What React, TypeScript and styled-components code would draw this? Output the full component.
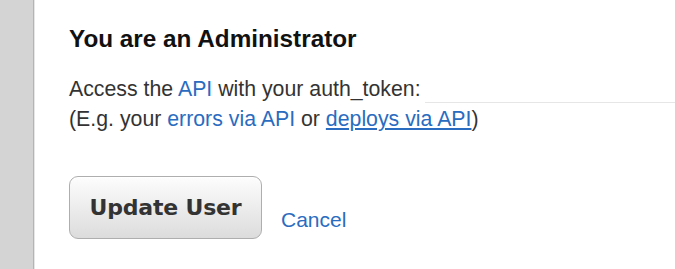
import React from "react";
import styled, { createGlobalStyle } from "styled-components";

const Global = createGlobalStyle`
  html, body {
    margin: 0;
    padding: 0;
    background: #fff;
  }
  body {
    font-family: "Liberation Sans", Arial, sans-serif;
    color: #333;
    overflow: hidden;
  }
`;

const Page = styled.div`
  display: flex;
  height: 269px;
`;

const Rail = styled.div`
  width: 33px;
  flex: none;
  background: #d4d4d4;
  border-right: 1px solid #b4b4b4;
  box-shadow: 1px 0 0 #e6e6e6;
`;

const Content = styled.div`
  flex: 1;
  padding: 24px 0 0 35px;
  min-width: 0;
`;

const Heading = styled.h2`
  margin: 0;
  font-size: 24.3px;
  line-height: 29px;
  font-weight: bold;
  color: #111;
`;

const Para = styled.div`
  margin-top: 21px;
  font-size: 21.3px;
  line-height: 30px;
  white-space: nowrap;
`;

const Row = styled.div`
  display: flex;
  align-items: flex-end;
`;

const TokenField = styled.input`
  flex: 1;
  margin: 0 0 1px 4px;
  height: 22px;
  border: none;
  border-bottom: 1px solid #e6e6e6;
  outline: none;
  padding: 0;
  background: transparent;
`;

const Link = styled.a<{ $underline?: boolean }>`
  color: #2a6cc0;
  text-decoration: ${(p) => (p.$underline ? "underline" : "none")};
  text-underline-offset: 2px;
`;

const Actions = styled.div`
  display: flex;
  align-items: center;
  gap: 19px;
  margin-top: 42px;
`;

const Button = styled.button`
  width: 193px;
  height: 63px;
  border: 1px solid #aeaeae;
  border-radius: 9px;
  background: linear-gradient(#fdfdfd, #dcdcdc);
  box-shadow: inset 0 1px 0 #fff;
  font-family: "DejaVu Sans", sans-serif;
  font-weight: bold;
  font-size: 22px;
  letter-spacing: -0.2px;
  color: #333;
  padding: 0;
`;

const CancelLink = styled(Link)`
  font-size: 21px;
  margin-top: 25px;
`;

export default function App() {
  return (
    <>
      <Global />
      <Page>
        <Rail />
        <Content>
          <Heading>You are an Administrator</Heading>
          <Para>
            <Row>
              <span>
                Access the <Link href="#">API</Link> with your auth_token:
              </span>
              <TokenField readOnly />
            </Row>
            <div>
              (E.g. your <Link href="#">errors via API</Link> or{" "}
              <Link href="#" $underline>
                deploys via API
              </Link>
              )
            </div>
          </Para>
          <Actions>
            <Button type="button">Update User</Button>
            <CancelLink href="#">Cancel</CancelLink>
          </Actions>
        </Content>
      </Page>
    </>
  );
}
